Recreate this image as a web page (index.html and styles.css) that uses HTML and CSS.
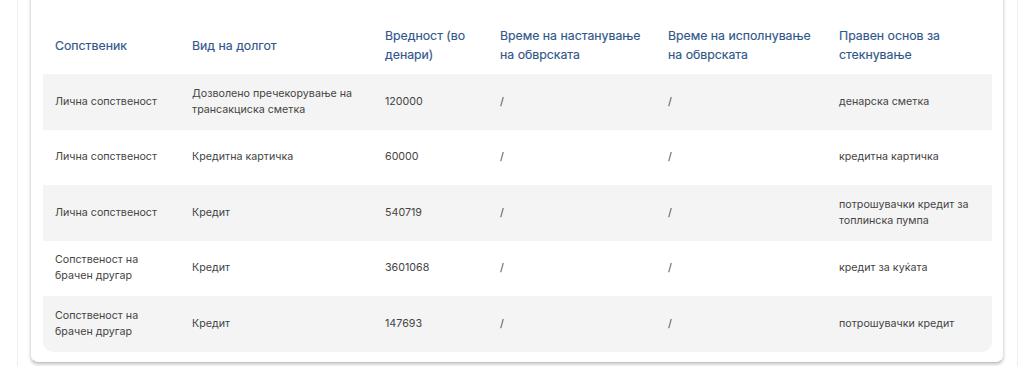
FILE: index.html
```html
<!DOCTYPE html>
<html lang="mk">
<head>
<meta charset="utf-8">
<link rel="stylesheet" href="styles.css">
</head>
<body>
<div class="outer">
  <div class="card">
    <table class="debts">
      <colgroup>
        <col class="c1"><col class="c2"><col class="c3"><col class="c4"><col class="c5"><col class="c6">
      </colgroup>
      <thead>
        <tr>
          <th>Сопственик</th>
          <th>Вид на долгот</th>
          <th>Вредност (во денари)</th>
          <th>Време на настанување на обврската</th>
          <th>Време на исполнување на обврската</th>
          <th>Правен основ за стекнување</th>
        </tr>
      </thead>
      <tbody>
        <tr>
          <td>Лична сопственост</td>
          <td>Дозволено пречекорување на трансакциска сметка</td>
          <td>120000</td>
          <td>/</td>
          <td>/</td>
          <td>денарска сметка</td>
        </tr>
        <tr>
          <td>Лична сопственост</td>
          <td>Кредитна картичка</td>
          <td>60000</td>
          <td>/</td>
          <td>/</td>
          <td>кредитна картичка</td>
        </tr>
        <tr>
          <td>Лична сопственост</td>
          <td>Кредит</td>
          <td>540719</td>
          <td>/</td>
          <td>/</td>
          <td>потрошувачки кредит за топлинска пумпа</td>
        </tr>
        <tr>
          <td>Сопственост на брачен другар</td>
          <td>Кредит</td>
          <td>3601068</td>
          <td>/</td>
          <td>/</td>
          <td>кредит за куќата</td>
        </tr>
        <tr>
          <td>Сопственост на брачен другар</td>
          <td>Кредит</td>
          <td>147693</td>
          <td>/</td>
          <td>/</td>
          <td>потрошувачки кредит</td>
        </tr>
      </tbody>
    </table>
  </div>
</div>
</body>
</html>
```
FILE: styles.css
```css
html, body {
  margin: 0;
  padding: 0;
  background: #ffffff;
  font-family: Inter, "Noto Sans", sans-serif;
  overflow: hidden;
}

.outer {
  margin: 0 6px 0 17px;
  border-left: 1px solid #eeeeee;
  border-right: 1px solid #eeeeee;
  padding: 0.1px 13px 0 12px;
  height: 366px;
  box-sizing: border-box;
}

.card {
  margin-top: -14px;
  background: #ffffff;
  border: 1px solid #e2e2e2;
  border-bottom-color: #c4c4c4;
  border-radius: 8px;
  box-shadow: 0 2px 3px rgba(0, 0, 0, 0.18);
  padding: 23px 11px 10px 12px;
}

.debts {
  width: 100%;
  border-collapse: separate;
  border-spacing: 0;
  table-layout: fixed;
}

.c1 { width: 137px; }
.c2 { width: 193px; }
.c3 { width: 115px; }
.c4 { width: 168px; }
.c5 { width: 171px; }
.c6 { width: auto; }

.debts th {
  text-align: left;
  font-weight: 400;
  font-size: 12.3px;
  line-height: 19px;
  color: #30568a;
  padding: 16px 4px 10px 12px;
  vertical-align: middle;
  height: 38px;
  -webkit-text-stroke: 0.15px #30568a;
}

.debts td {
  font-size: 10.7px;
  line-height: 16px;
  color: #454545;
  padding: 0 10px 0 12px;
  height: 55.5px;
  vertical-align: middle;
}

.debts tbody tr:nth-child(odd) td {
  background: #f4f4f4;
}

.debts tbody tr:last-child td:first-child {
  border-bottom-left-radius: 10px;
}

.debts tbody tr:last-child td:last-child {
  border-bottom-right-radius: 10px;
}
```
